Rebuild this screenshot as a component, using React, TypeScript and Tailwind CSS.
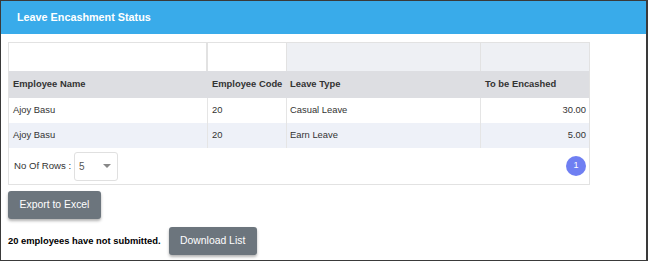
import React from "react";

const font = { fontFamily: '"Liberation Sans", Arial, sans-serif' };

export default function App() {
  const rows = [
    { name: "Ajoy Basu", code: "20", type: "Casual Leave", amt: "30.00" },
    { name: "Ajoy Basu", code: "20", type: "Earn Leave", amt: "5.00" },
  ];
  return (
    <div
      className="w-[648px] h-[261px] bg-white border border-[#3a3a3a] border-r-2 flex flex-col overflow-hidden"
      style={font}
    >
      <div className="h-[33px] bg-[#39abea] flex items-center pl-[16px] shrink-0">
        <span className="text-white font-bold text-[10.8px]">Leave Encashment Status</span>
      </div>
      <div className="ml-[7px] mt-[8px] w-[582px] border border-[#e2e2e2]">
        <div className="grid grid-cols-[199px_79px_194px_108px] h-[28px]">
          <div className="bg-white border-r-2 border-[#e2e2e2]" />
          <div className="bg-white border-r border-[#e2e2e2]" />
          <div className="bg-[#eef0f4] border-r border-[#e2e2e2]" />
          <div className="bg-[#eef0f4]" />
        </div>
        <div className="grid grid-cols-[199px_79px_194px_108px] h-[27px] bg-[#dddee2] text-[9.4px] font-bold text-[#333]">
          <div className="flex items-center pl-[4px]">Employee Name</div>
          <div className="flex items-center pl-[4px]">Employee Code</div>
          <div className="flex items-center pl-[3px]">Leave Type</div>
          <div className="flex items-center pl-[4px]">To be Encashed</div>
        </div>
        {rows.map((r, i) => (
          <div
            key={i}
            className={`grid grid-cols-[199px_79px_194px_108px] h-[25px] text-[9.4px] text-[#333] ${
              i % 2 === 1 ? "bg-[#eef1f8]" : "bg-white"
            }`}
          >
            <div className="flex items-center pl-[4px] border-r border-[#e5e5e5]">{r.name}</div>
            <div className="flex items-center pl-[4px] border-r border-[#e5e5e5]">{r.code}</div>
            <div className="flex items-center pl-[3px] border-r border-[#e5e5e5]">{r.type}</div>
            <div className="flex items-center justify-end pr-[3px]">{r.amt}</div>
          </div>
        ))}
        <div className="h-[36px] flex items-center justify-between pl-[5px] pr-[3px]">
          <div className="flex items-center text-[9.6px] text-[#333]">
            <span>No Of Rows :</span>
            <div className="ml-[3px] w-[44px] h-[29px] border border-[#e0e0e0] rounded-[3px] flex items-center justify-between pl-[4px] pr-[6px]">
              <span className="text-[10px] text-[#555]">5</span>
              <svg width="8" height="4" viewBox="0 0 8 4">
                <path d="M0 0 L8 0 L4 4 Z" fill="#888" />
              </svg>
            </div>
          </div>
          <div className="w-[20px] h-[20px] rounded-full bg-[#6f7ff2] text-white text-[9px] flex items-center justify-center">
            1
          </div>
        </div>
      </div>
      <div className="ml-[7px] mt-[6px]">
        <button className="w-[93px] h-[28px] bg-[#6c757d] text-white text-[10.4px] rounded-[3px] shadow-[0_2px_3px_rgba(0,0,0,0.3)]">
          Export to Excel
        </button>
      </div>
      <div className="ml-[7px] mt-[8px] flex items-center">
        <span className="text-[9.4px] font-bold text-black">20 employees have not submitted.</span>
        <button className="ml-[8px] w-[88px] h-[28px] bg-[#6c757d] text-white text-[10.4px] rounded-[3px] shadow-[0_2px_3px_rgba(0,0,0,0.3)]">
          Download List
        </button>
      </div>
    </div>
  );
}
